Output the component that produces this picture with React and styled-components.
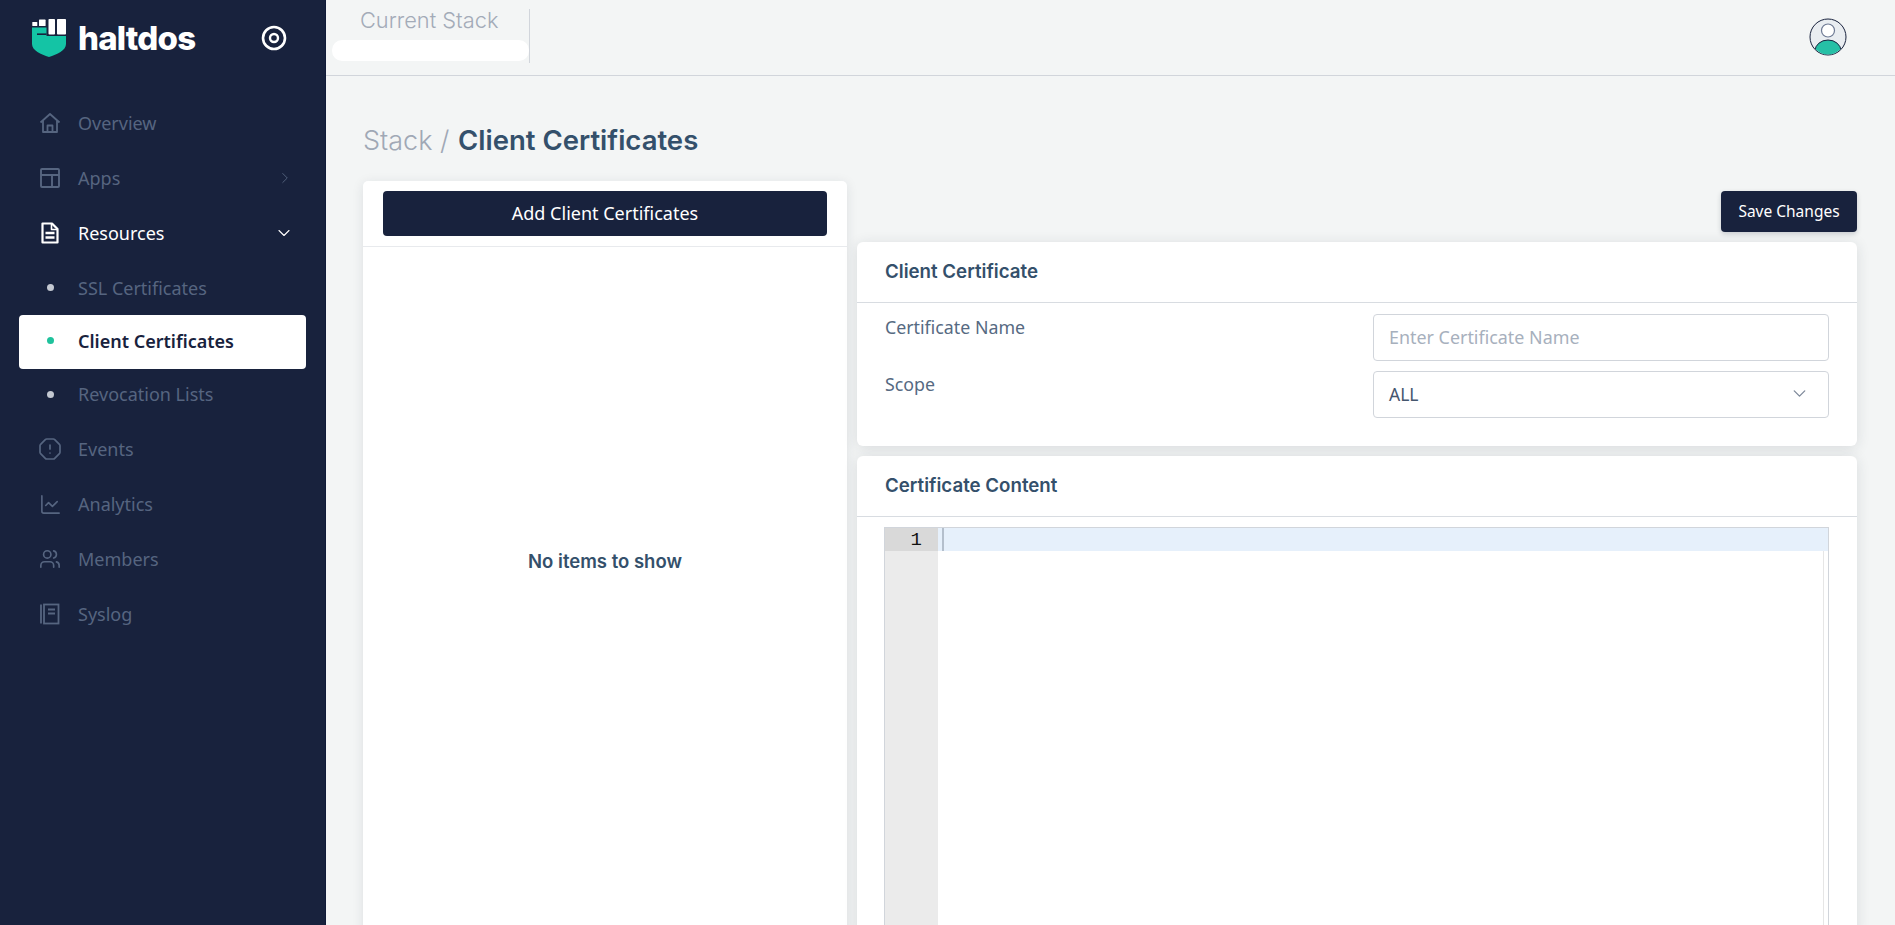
import React from "react";
import styled, { createGlobalStyle } from "styled-components";
import { ChevronRight, ChevronDown, OctagonAlert, ChartLine, Users } from "lucide-react";

const GlobalStyle = createGlobalStyle`
  * { box-sizing: border-box; }
  html, body { margin: 0; padding: 0; height: 100%; overflow: hidden; background: #f3f5f5; }
  body { font-family: "Noto Sans", "Liberation Sans", sans-serif; }
`;

const HomeIcon = () => (
  <svg width="22" height="22" viewBox="0 0 22 22" fill="none" stroke="currentColor" strokeWidth="1.8" strokeLinejoin="round">
    <path d="M1.5 10.5 11 2l9.5 8.5" />
    <path d="M4 8.5V20h14V8.5" />
    <path d="M8.5 20v-6.5h5V20" />
  </svg>
);

const AppsIcon = () => (
  <svg width="22" height="22" viewBox="0 0 22 22" fill="none" stroke="currentColor" strokeWidth="1.9">
    <rect x="2" y="2" width="18" height="18" rx="1" />
    <path d="M2 8h18M13 8v12" />
  </svg>
);

const FileIcon = () => (
  <svg width="22" height="22" viewBox="0 0 22 22" fill="none" stroke="currentColor" strokeWidth="2.2" strokeLinejoin="round">
    <path d="M3.5 1.5h9.5l5.5 5.5v13.5h-15z" />
    <path d="M12.5 1.5v6h6" strokeWidth="1.6" />
    <path d="M6.5 11h9M6.5 15.5h9" strokeWidth="2.4" />
  </svg>
);

const BookIcon = () => (
  <svg width="22" height="22" viewBox="0 0 22 22" fill="none" stroke="currentColor" strokeWidth="1.8">
    <path d="M2 1.5v19" />
    <rect x="5" y="1.5" width="14.5" height="19" />
    <path d="M9 6.5h7M9 10.5h7" />
  </svg>
);

const Logo = () => (
  <svg width="35" height="38" viewBox="0 0 35 38">
    <rect x="0.3" y="3" width="5" height="4" rx="0.6" fill="#fff" />
    <rect x="7" y="0.6" width="6.6" height="6.4" rx="0.6" fill="#fff" />
    <rect x="16.5" y="0" width="6.5" height="15.5" rx="0.8" fill="#fff" />
    <rect x="25" y="0" width="9" height="15.5" rx="0.8" fill="#fff" />
    <path d="M0 8.5H14.5V17H34V25C34 31.5 25 35.5 17 38C9 35.5 0 31.5 0 25Z" fill="#14c4a5" />
    <rect x="5" y="14.4" width="9.5" height="1.6" fill="#18223d" />
  </svg>
);

const TargetIcon = () => (
  <svg width="26" height="26" viewBox="0 0 26 26" fill="none" stroke="#fff">
    <circle cx="13" cy="13" r="11" strokeWidth="2.6" />
    <circle cx="13" cy="13" r="4" strokeWidth="2.4" />
  </svg>
);

const Avatar = () => (
  <AvatarBox>
    <svg width="38" height="38" viewBox="0 0 38 38">
      <defs>
        <clipPath id="avatar-clip">
          <circle cx="19" cy="19" r="17.5" />
        </clipPath>
      </defs>
      <circle cx="19" cy="19" r="18" fill="#e9edf1" stroke="#18223d" strokeWidth="1" />
      <g clipPath="url(#avatar-clip)">
        <ellipse cx="19" cy="33" rx="13" ry="11" fill="#26c0a6" stroke="#18223d" strokeWidth="1" />
      </g>
      <circle cx="19" cy="12.5" r="6.5" fill="#fff" stroke="#6e7a94" strokeWidth="1.2" />
    </svg>
  </AvatarBox>
);

const navItems = [
  { label: "Overview", icon: <HomeIcon /> },
  { label: "Apps", icon: <AppsIcon />, arrow: "right" },
  { label: "Resources", icon: <FileIcon />, arrow: "down", open: true },
  { label: "SSL Certificates", sub: true },
  { label: "Client Certificates", sub: true, active: true },
  { label: "Revocation Lists", sub: true },
  { label: "Events", icon: <OctagonAlert size={24} strokeWidth={1.7} /> },
  { label: "Analytics", icon: <ChartLine size={23} strokeWidth={1.7} /> },
  { label: "Members", icon: <Users size={22} strokeWidth={1.8} /> },
  { label: "Syslog", icon: <BookIcon /> },
];

export default function App() {
  return (
    <Page>
      <GlobalStyle />
      <Sidebar>
        <Brand>
          <Logo />
          <BrandName>haltdos</BrandName>
          <BrandToggle>
            <TargetIcon />
          </BrandToggle>
        </Brand>
        <Nav>
          {navItems.map((item) =>
            item.sub ? (
              <SubItem key={item.label} $active={item.active}>
                <Dot $active={item.active} />
                {item.label}
              </SubItem>
            ) : (
              <NavItem key={item.label} $open={item.open}>
                <NavIcon>{item.icon}</NavIcon>
                {item.label}
                {item.arrow === "right" && (
                  <NavArrow>
                    <ChevronRight size={18} strokeWidth={1.2} />
                  </NavArrow>
                )}
                {item.arrow === "down" && (
                  <NavArrow>
                    <ChevronDown size={20} strokeWidth={1.3} />
                  </NavArrow>
                )}
              </NavItem>
            )
          )}
        </Nav>
      </Sidebar>

      <Main>
        <TopBar>
          <StackBox>
            <StackLabel>Current Stack</StackLabel>
            <StackValue />
          </StackBox>
          <Avatar />
        </TopBar>

        <Content>
          <Title>
            <span>Stack / </span>
            <strong>Client Certificates</strong>
          </Title>

          <Columns>
            <ListCard>
              <ListHead>
                <AddButton>Add Client Certificates</AddButton>
              </ListHead>
              <Empty>No items to show</Empty>
            </ListCard>

            <Detail>
              <SaveRow>
                <SaveButton>Save Changes</SaveButton>
              </SaveRow>

              <FormCard>
                <CardTitle>Client Certificate</CardTitle>
                <FormBody>
                  <FieldLabel>Certificate Name</FieldLabel>
                  <TextInput placeholder="Enter Certificate Name" />
                  <FieldLabel>Scope</FieldLabel>
                  <SelectBox>
                    ALL
                    <ChevronDown size={21} strokeWidth={1.5} color="#7d8899" />
                  </SelectBox>
                </FormBody>
              </FormCard>

              <EditorCard>
                <CardTitle>Certificate Content</CardTitle>
                <Editor>
                  <Gutter>
                    <LineNumber>1</LineNumber>
                  </Gutter>
                  <Code>
                    <ActiveLine>
                      <Caret />
                    </ActiveLine>
                    <CodeRest />
                  </Code>
                </Editor>
              </EditorCard>
            </Detail>
          </Columns>
        </Content>
      </Main>
    </Page>
  );
}

const Page = styled.div`
  display: flex;
  width: 1895px;
  height: 925px;
  overflow: hidden;
`;

const Sidebar = styled.aside`
  flex: 0 0 326px;
  background: #18223d;
  border-right: 1px solid #101a38;
  padding: 18px 19px 0;
`;

const Brand = styled.div`
  display: flex;
  align-items: center;
  height: 40px;
  padding-left: 13px;
`;

const BrandName = styled.div`
  margin-left: 11px;
  font-family: "Inter", sans-serif;
  font-size: 33px;
  font-weight: 800;
  letter-spacing: -0.8px;
  color: #fff;
`;

const BrandToggle = styled.div`
  display: flex;
  margin-left: auto;
  margin-right: 19px;
`;

const Nav = styled.nav`
  display: flex;
  flex-direction: column;
  margin-top: 37px;
`;

const NavItem = styled.div`
  display: flex;
  align-items: center;
  height: 55px;
  margin-bottom: ${(p) => (p.$open ? "2px" : "0")};
  padding: 0 12px 0 19px;
  font-size: 18px;
  color: ${(p) => (p.$open ? "#fff" : "#566580")};
`;

const NavIcon = styled.span`
  display: flex;
  justify-content: center;
  width: 24px;
  margin-right: 16px;
`;

const NavArrow = styled.span`
  display: flex;
  margin-left: auto;
`;

const SubItem = styled.div`
  display: flex;
  align-items: center;
  height: 53.34px;
  padding: 0 0 2px 28px;
  font-size: 18px;
  font-weight: ${(p) => (p.$active ? 600 : 400)};
  color: ${(p) => (p.$active ? "#18223d" : "#566580")};
  background: ${(p) => (p.$active ? "#fff" : "transparent")};
  border-radius: 4px;
`;

const Dot = styled.span`
  width: 7px;
  height: 7px;
  margin-right: 24px;
  border-radius: 50%;
  background: ${(p) => (p.$active ? "#1fc29c" : "#c3c8d1")};
`;

const Main = styled.main`
  flex: 1;
  min-width: 0;
  display: flex;
  flex-direction: column;
`;

const TopBar = styled.header`
  flex: 0 0 76px;
  display: flex;
  justify-content: space-between;
  padding: 0 48px 0 6px;
  border-bottom: 1px solid #d1d5db;
  align-items: flex-start;
`;

const AvatarBox = styled.div`
  display: flex;
  margin-top: 18px;
`;

const StackBox = styled.div`
  width: 198px;
  height: 54px;
  margin-top: 9px;
  border-right: 1px solid #d1d5db;
`;

const StackLabel = styled.div`
  padding-left: 28px;
  margin-top: -1px;
  font-family: "Inter", sans-serif;
  font-size: 21.8px;
  font-weight: 300;
  line-height: 24px;
  color: #a3abb8;
`;

const StackValue = styled.div`
  width: 197px;
  height: 21px;
  margin-top: 8px;
  background: #fff;
  border-radius: 10px;
`;

const Content = styled.div`
  flex: 1;
  min-height: 0;
  padding: 0 38px 0 37px;
`;

const Title = styled.h1`
  margin: 46px 0 22px;
  font-family: "Inter", sans-serif;
  font-size: 27px;
  line-height: 37px;
  font-weight: 300;
  color: #a0a8b5;

  strong {
    margin-left: 1px;
    font-size: 27.5px;
    font-weight: 600;
    color: #34506b;
  }
`;

const Columns = styled.div`
  display: grid;
  grid-template-columns: 484px 1000px;
  gap: 10px;
  align-items: start;
`;

const ListCard = styled.section`
  display: flex;
  flex-direction: column;
  height: 780px;
  background: #fff;
  border-radius: 5px;
  box-shadow: 0 2px 12px rgba(30, 40, 60, 0.1);
`;

const ListHead = styled.div`
  padding: 10px 20px 10px 20px;
  border-bottom: 1px solid #e8eaed;
`;

const AddButton = styled.button`
  display: block;
  width: 444px;
  height: 45px;
  padding-bottom: 2px;
  border: 0;
  border-radius: 4px;
  background: #18223d;
  color: #fff;
  font-family: "Noto Sans", sans-serif;
  font-size: 18px;
`;

const Empty = styled.div`
  margin-top: 303px;
  text-align: center;
  font-family: "Inter", sans-serif;
  font-size: 18.5px;
  font-weight: 600;
  color: #34506b;
`;

const Detail = styled.div`
  display: flex;
  flex-direction: column;
  gap: 10px;
  padding-top: 10px;
`;

const SaveRow = styled.div`
  display: flex;
  justify-content: flex-end;
`;

const SaveButton = styled.button`
  width: 136px;
  height: 41px;
  padding-bottom: 2px;
  border: 0;
  border-radius: 4px;
  background: #18223d;
  color: #fff;
  font-family: "Noto Sans", sans-serif;
  font-size: 15.5px;
  box-shadow: 0 2px 5px rgba(30, 40, 60, 0.2);
`;

const FormCard = styled.section`
  height: 204px;
  background: #fff;
  border-radius: 6px;
  box-shadow: 0 2px 14px rgba(30, 40, 60, 0.12);
`;

const EditorCard = styled(FormCard)`
  height: 480px;
`;

const CardTitle = styled.h2`
  height: 61px;
  margin: 0;
  padding: 0 28px;
  border-bottom: 1px solid #d8dce1;
  font-family: "Inter", sans-serif;
  font-size: 18.7px;
  line-height: 59px;
  font-weight: 600;
  color: #34506b;
`;

const FormBody = styled.div`
  display: grid;
  grid-template-columns: 1fr 456px;
  column-gap: 0;
  row-gap: 10px;
  padding: 11px 28px 0 28px;
`;

const FieldLabel = styled.label`
  font-size: 17.8px;
  line-height: 24px;
  color: #566a82;
  padding-top: 1px;
`;

const TextInput = styled.input`
  width: 100%;
  height: 47px;
  padding: 0 15px 2px;
  border: 1px solid #d1d5db;
  border-radius: 4px;
  outline: none;
  font-family: "Noto Sans", sans-serif;
  font-size: 17.9px;

  &::placeholder {
    color: #a7b0bd;
  }
`;

const SelectBox = styled.div`
  display: flex;
  align-items: center;
  justify-content: space-between;
  height: 47px;
  padding: 0 18px 2px 15px;
  border: 1px solid #d1d5db;
  border-radius: 4px;
  font-size: 17.5px;
  color: #45566e;
`;

const Editor = styled.div`
  display: flex;
  height: 420px;
  margin: 10px 28px 0 27px;
  border: 1px solid #d1d5db;
  border-bottom: 0;
`;

const Gutter = styled.div`
  flex: 0 0 53px;
  background: #ebebeb;
`;

const LineNumber = styled.div`
  height: 23px;
  padding-right: 16px;
  background: #d9d9d9;
  text-align: right;
  font-family: "Liberation Mono", monospace;
  font-size: 19px;
  line-height: 24px;
  color: #111;
`;

const Code = styled.div`
  flex: 1;
  display: flex;
  flex-direction: column;
`;

const ActiveLine = styled.div`
  height: 23px;
  padding-left: 4px;
  background: #e6f0fb;
`;

const Caret = styled.div`
  width: 2px;
  height: 100%;
  background: #b4bfcc;
`;

const CodeRest = styled.div`
  flex: 1;
  margin-right: 4px;
  border-right: 1px solid #e6e6e6;
`;
